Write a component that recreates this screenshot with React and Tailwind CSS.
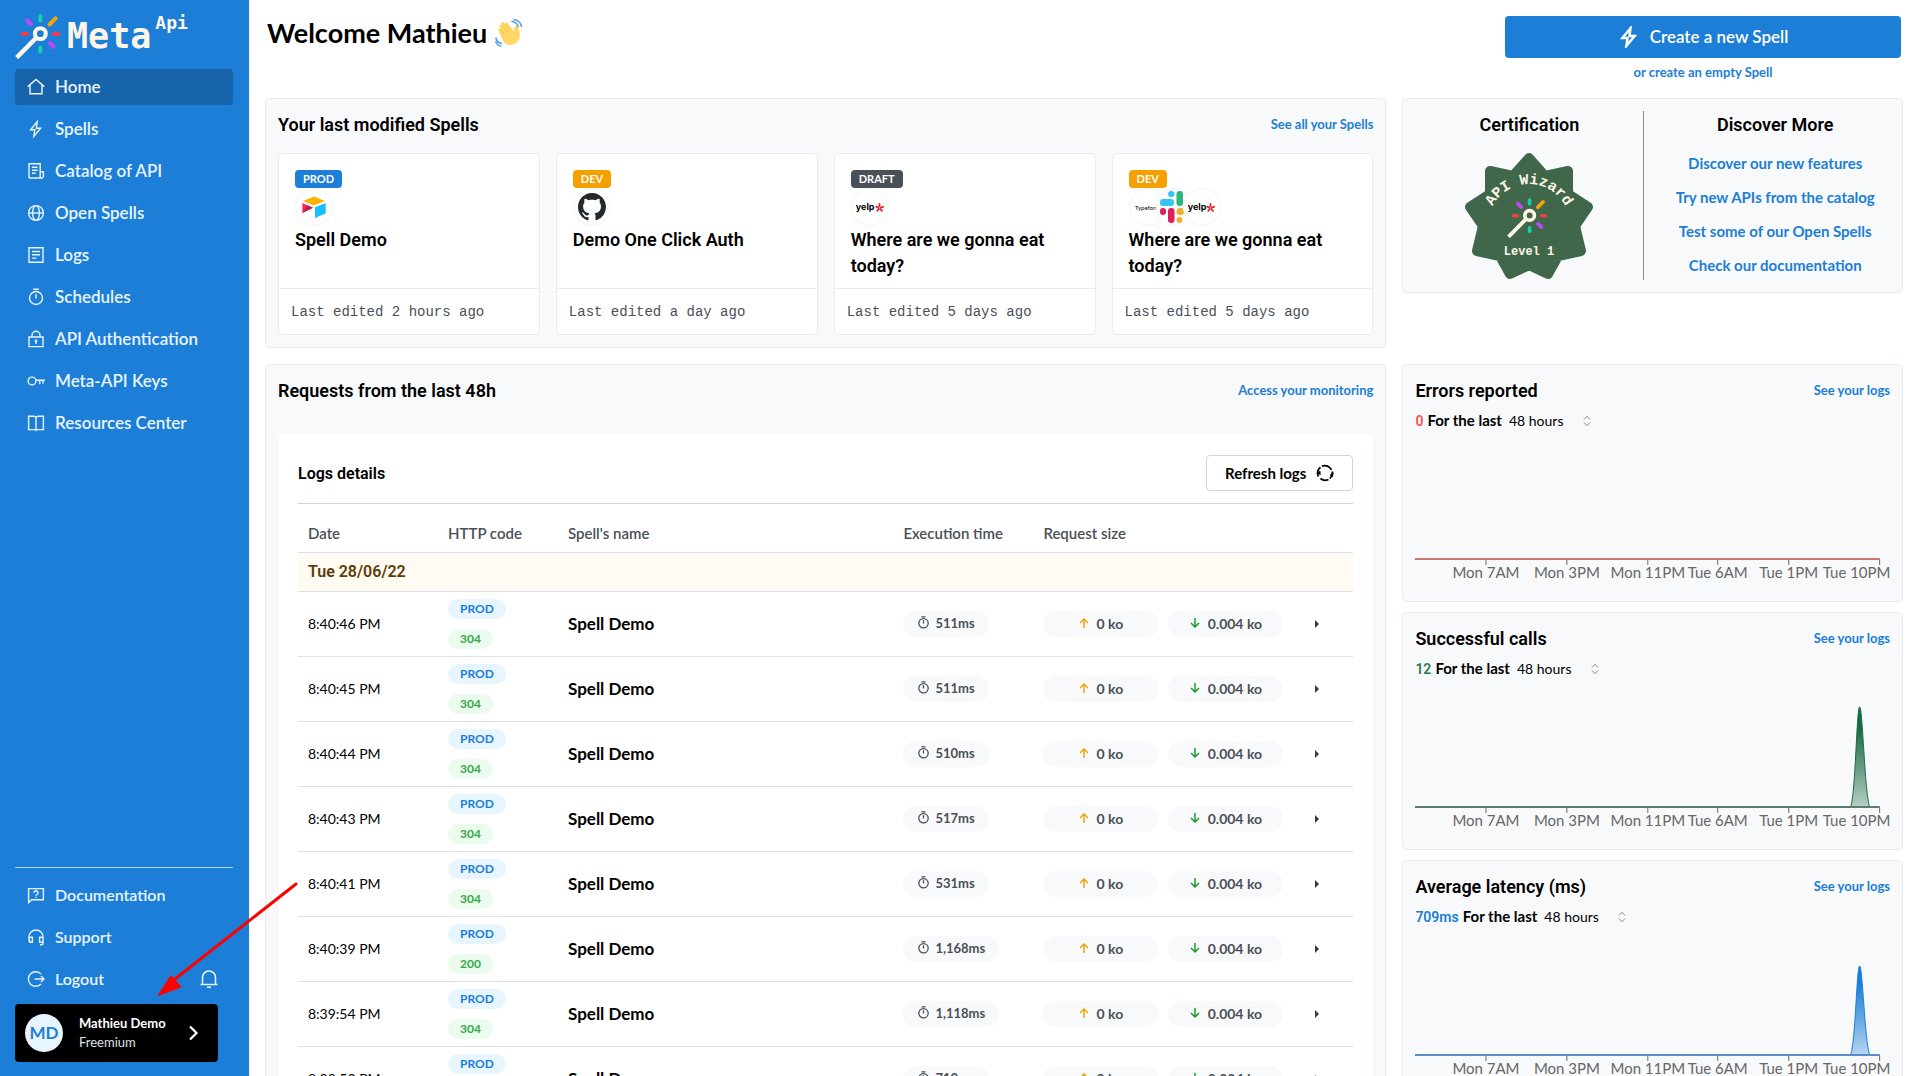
import React from "react";

const LATO = "font-['Lato','Open_Sans',sans-serif]";
const ROBOTO = "font-['Roboto','Liberation_Sans',sans-serif]";
const MONO = "font-['DejaVu_Sans_Mono','Liberation_Mono',monospace]";
const THIN_MONO = "font-['Liberation_Mono','DejaVu_Sans_Mono',monospace]";

function Icon({ children, className = "size-[18px]", width = 1.4, box = "0 0 18 18" }) {
  return (
    <svg
      viewBox={box}
      className={className}
      fill="none"
      stroke="currentColor"
      strokeWidth={width}
      aria-hidden="true"
    >
      {children}
    </svg>
  );
}

const glyphs = {
  home: <path d="M.8 8.600 9 1.400l8.200 7.200M3 7.200v8.600h12V7.200" />,
  spell: <path d="M10.200 1.800 3.600 9.800h4.200l-1 6.600 6.800-8.200H9.400z" />,
  catalog: (
    <path d="M2 16V1.800h11.200v10M2 16h12.400M13.200 9.800h3.200V14a2 2 0 0 1-3.200 1.600zM5 5.300h5.500M5 8.300h5.500M5 11.300h3.500" />
  ),
  globe: (
    <>
      <circle cx="9" cy="9" r="7.400" />
      <ellipse cx="9" cy="9" rx="3.400" ry="7.400" />
      <path d="M1.600 9h14.800" />
    </>
  ),
  logs: <path d="M2 1.800h14v14.400H2zM5 5.500h8M5 8.800h8M5 12.100h4.500" />,
  timer: (
    <>
      <circle cx="9" cy="10" r="6.500" />
      <path d="M6.200 1.200h5.600M9 6v4.500" />
    </>
  ),
  lock: (
    <>
      <path d="M2 7h14v9.600H2zM5 7V5.200a4 4 0 0 1 8 0V7M9 11v3" />
      <circle cx="9" cy="10.800" r=".7" />
    </>
  ),
  key: (
    <>
      <circle cx="5" cy="9" r="3.900" />
      <path d="M9 8.300h9M12.800 8.300v4M16 8.300v3.500" />
    </>
  ),
  book: <path d="M9 3.500v13.700M1.600 2.200h5.200A2.200 2.200 0 0 1 9 4.200a2.200 2.200 0 0 1 2.200-2h5.200v13.400H1.600z" />,
  docs: (
    <>
      <path d="M1.600 16.600V2.600h14.800v11.200H4.600z" />
      <path d="M7 6.800a2 2 0 1 1 2.800 1.800q-.8.300-.8 1.100M9 10.700v1.300" />
    </>
  ),
  support: (
    <path d="M2 13.500V9a7 7 0 0 1 14 0v6.500q0 1.300-3 1.300M2 9.300h3.400v5H2.800zM16 9.300h-3.400v5H16" />
  ),
  logout: <path d="M14 4A7.300 7.300 0 1 0 14 14M7.500 9h9.500M14 6l3 3-3 3" />,
};

function NavItem({ icon, label, active, size = "text-[17px]" }) {
  return (
    <a
      href="#"
      className={`flex h-9 items-center gap-[10px] rounded-sm pl-3 font-semibold text-[#e8f4ff] ${size} ${
        active ? "bg-[#1864ab]" : ""
      }`}
    >
      <Icon>{glyphs[icon]}</Icon>
      {label}
    </a>
  );
}

function Wand({ className }) {
  return (
    <svg viewBox="14 26 136 136" className={className} fill="none" strokeLinecap="round" aria-hidden="true">
      <g strokeWidth="12">
        <path stroke="#12d3a8" d="M89 36v12M89 128v12" />
        <path stroke="#f03e4d" d="M36 88h13M129 88h13" />
        <path stroke="#f5a30a" d="m116 60 18-18" />
        <path stroke="#be4bfa" d="m50 48 11 11M117 115l11 11" />
      </g>
      <path stroke="#fdf6e6" strokeWidth="13" strokeLinecap="butt" d="m19 158 58-59" />
      <circle cx="89" cy="87" r="16" stroke="#fdf6e6" strokeWidth="12" />
    </svg>
  );
}

function Wave() {
  return (
    <svg viewBox="0 0 28 28" className="size-7" fill="none" aria-hidden="true">
      <path
        d="M3.500 11.500c-.8-1.500 1-2.800 2.100-1.400L4.600 7.800c-.9-1.800 1.300-3.200 2.500-1.500l-.7-1.200c-.8-1.700 1.400-3 2.600-1.300l1.200 1.700c-.5-1.700 1.500-2.700 2.600-1.200l6.200 8.200.2-3.600c.1-2.300 3.500-2.600 4.300-.3 1.500 5.500 2.700 11-1.800 15-4.600 4-10.500 3-13.700-1.600z"
        fill="#ffd766"
      />
      <path d="m7.500 6.500 5.500 7.500M5 10l5.500 7M10.700 5.300l5 7" stroke="#eeb547" strokeWidth=".6" />
      <path
        d="M17 2.500c3 .2 5 2 6 5M19 .8c4 .2 6.500 2.700 7.500 6.500M1 19c.5 3 2.500 5 5.500 5.500M.8 23c1 2.500 2.500 3.800 5 4"
        stroke="#5d9fe8"
        strokeWidth="1.600"
        strokeLinecap="round"
      />
    </svg>
  );
}

function Sidebar() {
  return (
    <aside className={`flex h-screen w-[249px] shrink-0 flex-col bg-[#1c7ed6] px-[15px] pb-[14px] ${LATO}`}>
      <div className={`flex h-[69px] items-start pt-[13px] text-[#fdf6e6] ${MONO} font-bold`}>
        <Wand className="size-[46px] shrink-0" />
        <span className="ml-[6px] mt-1 text-[35px] leading-[38px]">Meta</span>
        <span className="ml-1 text-lg leading-5">Api</span>
      </div>
      <nav className="mr-px flex flex-col gap-[6px]">
        <NavItem icon="home" label="Home" active />
        <NavItem icon="spell" label="Spells" />
        <NavItem icon="catalog" label="Catalog of API" />
        <NavItem icon="globe" label="Open Spells" />
        <NavItem icon="logs" label="Logs" />
        <NavItem icon="timer" label="Schedules" />
        <NavItem icon="lock" label="API Authentication" />
        <NavItem icon="key" label="Meta-API Keys" />
        <NavItem icon="book" label="Resources Center" />
      </nav>
      <nav className="mr-px mt-auto flex flex-col gap-[6px] border-t border-[#a5d8ff] pt-[9px]">
        <NavItem icon="docs" label="Documentation" size="text-base" />
        <NavItem icon="support" label="Support" size="text-base" />
        <div className="flex items-center justify-between pr-[14px]">
          <NavItem icon="logout" label="Logout" size="text-base" />
          <button aria-label="Notifications" className="text-[#e8f4ff]">
            <Icon box="0 0 20 20" className="size-5" width={1.5}>
              <path d="M1.500 15.500h17M3.500 15.500V8.500a6.500 6.500 0 0 1 13 0v7M8 18.300h4" />
            </Icon>
          </button>
        </div>
      </nav>
      <button className="mr-4 mt-[7px] flex h-[58px] items-center rounded-sm bg-black pl-[10px] pr-4 text-left text-[13px] text-white">
        <span className="flex size-[38px] items-center justify-center rounded-full bg-[#e7f5ff] text-[17px] font-bold text-[#1c7ed6]">
          MD
        </span>
        <span className="ml-4 flex-1 leading-[19px]">
          <span className="block font-bold">Mathieu Demo</span>
          <span className="block text-[#dee2e6]">Freemium</span>
        </span>
        <Icon width={2.2}>
          <path d="m6 2.500 6.500 6.500L6 15.500" />
        </Icon>
      </button>
    </aside>
  );
}

function Panel({ title, link, className = "", children }) {
  return (
    <section className={`rounded-sm border border-[#e9ecef] bg-[#f8f9fb] p-3 ${className}`}>
      <div className="flex h-7 items-start justify-between">
        <h2 className={`${ROBOTO} text-lg font-semibold leading-7 text-black`}>{title}</h2>
        <a href="#" className="text-[13px] font-bold leading-[26px] text-[#1c7ed6]">
          {link}
        </a>
      </div>
      {children}
    </section>
  );
}

function AppCircle({ overlap, children }) {
  return (
    <span
      className={`flex size-[38px] items-center justify-center overflow-hidden rounded-full border border-[#f1f3f5] bg-white ${
        overlap ? "-ml-[11px]" : ""
      }`}
    >
      {children}
    </span>
  );
}

function Airtable() {
  return (
    <svg viewBox="0 0 24 22" className="w-6" aria-hidden="true">
      <path fill="#fcb400" d="M12 0.500 23 5 12 9.500 1 5z" />
      <path fill="#18bfff" d="M13 11.300 23.700 7v10.600L13 22z" />
      <path fill="#f82b60" d="M.3 7 11 11.800.3 17z" />
      <path fill="#ba1e45" d="m.3 17 5-7.700L11 11.800z" />
    </svg>
  );
}

function GitHub() {
  return (
    <svg viewBox="0 0 16 16" className="size-7" fill="#24292f" aria-hidden="true">
      <path d="M8 0C3.580 0 0 3.580 0 8c0 3.540 2.290 6.530 5.470 7.590.4.070.55-.17.55-.38 0-.19-.01-.82-.01-1.490-2.010.37-2.530-.49-2.690-.94-.09-.23-.48-.94-.82-1.130-.28-.15-.68-.52-.01-.53.63-.01 1.080.58 1.230.82.720 1.210 1.870.87 2.330.66.070-.52.28-.87.51-1.070-1.780-.2-3.640-.89-3.640-3.950 0-.87.31-1.590.82-2.150-.08-.2-.36-1.020.08-2.120 0 0 .67-.21 2.200.82.640-.18 1.320-.27 2-.27s1.360.09 2 .27c1.530-1.040 2.200-.82 2.200-.82.440 1.100.160 1.920.080 2.120.510.560.820 1.270.820 2.150 0 3.070-1.870 3.750-3.650 3.950.290.250.540.730.540 1.480 0 1.070-.010 1.930-.010 2.200 0 .21.150.46.550.38A8.010 8.010 0 0 0 16 8c0-4.420-3.580-8-8-8z" />
    </svg>
  );
}

function Yelp() {
  return (
    <span className="flex items-center text-black">
      <span className="font-['Inter',sans-serif] text-[9px] font-bold leading-3">yelp</span>
      <svg viewBox="0 0 10 10" className="size-[9px]" stroke="#e0232e" strokeWidth="2" strokeLinecap="round" aria-hidden="true">
        <path d="M5 1v2.700M1.400 4 3.500 5M2.500 8.800 4 6.700M6 6.700l1.800 2M6.500 5l2.500-.8" />
      </svg>
    </span>
  );
}

function Slack() {
  return (
    <svg viewBox="0 0 24 32" className="mr-[6px] w-6 shrink-0" aria-hidden="true">
      <rect x="8" y="0" width="6.500" height="6" rx="3" fill="#36c5f0" />
      <rect x="0" y="8" width="14" height="7" rx="3" fill="#36c5f0" />
      <rect x="16.500" y="0" width="6.500" height="15" rx="3" fill="#2eb67d" />
      <rect x="0" y="17" width="6" height="7" rx="3" fill="#e01e5a" />
      <rect x="8" y="17" width="6.500" height="15" rx="3" fill="#e01e5a" />
      <rect x="16.500" y="17" width="7.500" height="7" rx="3" fill="#ecb22e" />
      <rect x="16.500" y="26" width="6" height="6" rx="3" fill="#ecb22e" />
    </svg>
  );
}

const spells = [
  { badge: "PROD", color: "bg-[#1c7ed6]", title: "Spell Demo", edited: "2 hours ago", apps: [<Airtable />] },
  { badge: "DEV", color: "bg-[#f59f00]", title: "Demo One Click Auth", edited: "a day ago", apps: [<GitHub />] },
  { badge: "DRAFT", color: "bg-[#495057]", title: "Where are we gonna eat today?", edited: "5 days ago", apps: [<Yelp />] },
  {
    badge: "DEV",
    color: "bg-[#f59f00]",
    title: "Where are we gonna eat today?",
    edited: "5 days ago",
    apps: [<span className="text-[6px] text-black">Typeform</span>, <Slack />, <Yelp />],
  },
];

function SpellCard({ spell }) {
  return (
    <article className="flex flex-col rounded-sm border border-[#e9ecef] bg-white">
      <div className="h-[134px] px-4 pt-4">
        <span className={`flex h-[18px] w-fit items-center rounded-sm px-2 text-[11px] font-bold text-white ${spell.color}`}>
          {spell.badge}
        </span>
        <div className="flex">
          {spell.apps.map((app, i) => (
            <AppCircle key={i} overlap={i > 0}>
              {app}
            </AppCircle>
          ))}
        </div>
        <h3 className={`${ROBOTO} mt-px text-lg font-semibold leading-[26px] text-black`}>{spell.title}</h3>
      </div>
      <p className={`flex h-[46px] items-center border-t border-[#e9ecef] px-3 text-sm text-[#495057] ${THIN_MONO}`}>
        Last edited {spell.edited}
      </p>
    </article>
  );
}

function CertificationBadge() {
  return (
    <svg viewBox="0 0 130 128" className="w-[130px]" aria-label="API Wizard, level 1">
      <path
        fill="#40674a"
        stroke="#40674a"
        strokeWidth="10"
        strokeLinejoin="round"
        d="M65 6 81 24 104 19 104 42 124 55 111 74 117 99 94 104 84 122 65 113 46 122 36 104 13 99 19 74 6 55 26 42 26 19 49 24z"
      />
      <path id="wizard-arc" d="M24 73a41 41 0 0 1 82 0" fill="none" />
      <text fill="#fdf6e6" className="font-['Liberation_Mono','DejaVu_Sans_Mono',monospace] text-[15px] font-bold">
        <textPath href="#wizard-arc" startOffset="50%" textAnchor="middle">
          API Wizard
        </textPath>
      </text>
      <svg x="43" y="45" width="41" height="41">
        <Wand />
      </svg>
      <text
        x="65"
        y="103"
        textAnchor="middle"
        fill="#fdf6e6"
        className="font-['Liberation_Mono','DejaVu_Sans_Mono',monospace] text-[12px] font-bold"
      >
        Level 1
      </text>
    </svg>
  );
}

function Discover() {
  return (
    <section className="grid grid-cols-[14fr_15fr] self-start rounded-sm border border-[#e9ecef] bg-[#f8f9fb] p-3">
      <div className="flex h-[169px] flex-col items-center border-r border-[#868e96]">
        <h2 className={`${ROBOTO} text-lg font-semibold leading-7 text-black`}>Certification</h2>
        <div className="mt-[13px]">
          <CertificationBadge />
        </div>
      </div>
      <div className="flex flex-col items-center pl-4">
        <h2 className={`${ROBOTO} text-lg font-semibold leading-7 text-black`}>Discover More</h2>
        <ul className="mt-[14px] flex flex-col items-center gap-[14px] text-[15px] font-bold leading-5 text-[#1c7ed6]">
          <li><a href="#">Discover our new features</a></li>
          <li><a href="#">Try new APIs from the catalog</a></li>
          <li><a href="#">Test some of our Open Spells</a></li>
          <li><a href="#">Check our documentation</a></li>
        </ul>
      </div>
    </section>
  );
}

const logs = [
  ["8:40:46 PM", "304", "511ms"],
  ["8:40:45 PM", "304", "511ms"],
  ["8:40:44 PM", "304", "510ms"],
  ["8:40:43 PM", "304", "517ms"],
  ["8:40:41 PM", "304", "531ms"],
  ["8:40:39 PM", "200", "1,168ms"],
  ["8:39:54 PM", "304", "1,118ms"],
  ["8:39:53 PM", "304", "710ms"],
];

function SizePill({ up, children }) {
  return (
    <span className="flex h-[26px] w-[115px] items-center justify-center gap-2 rounded-full bg-[#f8f9fa]">
      <Icon box="0 0 10 12" className={`h-3 w-[10px] ${up ? "text-[#f5a30a]" : "text-[#1a9a2c]"}`} width={1.5}>
        <path d={up ? "M5 10V1M1 5l4-4 4 4" : "M5 0v9M1 5l4 4 4-4"} />
      </Icon>
      {children}
    </span>
  );
}

function LogsTable() {
  return (
    <div className="mt-[29px] rounded-sm bg-white px-5 pt-[21px] shadow-xs">
      <div className="flex h-[49px] items-start justify-between border-b border-[#ced4da]">
        <h3 className={`${ROBOTO} text-base font-semibold leading-[37px] text-black`}>Logs details</h3>
        <button className="flex h-9 items-center gap-[10px] rounded-sm border border-[#ced4da] px-[18px] text-[15px] font-bold text-black">
          Refresh logs
          <Icon width={1.8}>
            <path d="M2.500 12.500A7.300 7.300 0 0 1 4.500 3.200M6 2.200a7.300 7.300 0 0 1 9.500 3.600M16.200 7.500a7.300 7.300 0 0 1-2.400 7M12.500 15.500a7.300 7.300 0 0 1-8-1" />
            <path d="M.6 9.500 4 7l.5 3.500zM17.400 9 14 11l2.500 2z" fill="currentColor" strokeWidth=".5" />
          </Icon>
        </button>
      </div>
      <table className="mt-3 w-full table-fixed border-collapse text-left text-sm">
        <colgroup>
          <col className="w-[140px]" />
          <col className="w-[120px]" />
          <col />
          <col className="w-[140px]" />
          <col className="w-[260px]" />
          <col className="w-[60px]" />
        </colgroup>
        <thead>
          <tr className="h-9 border-b border-[#dee2e6] text-[15px] text-[#495057]">
            <th className="px-[10px] font-semibold">Date</th>
            <th className="px-[10px] font-semibold">HTTP code</th>
            <th className="px-[10px] font-semibold">Spell's name</th>
            <th className="px-[10px] font-semibold">Execution time</th>
            <th className="px-[10px] font-semibold">Request size</th>
            <td />
          </tr>
        </thead>
        <tbody>
          <tr className="h-[39px] border-b border-[#dee2e6] bg-[#fffaf2]">
            <td colSpan="6" className={`${ROBOTO} px-[10px] text-base font-semibold text-[#5c3d08]`}>
              Tue 28/06/22
            </td>
          </tr>
          {logs.map(([time, code, ms]) => (
            <tr key={time} className="h-[65px] border-b border-[#dee2e6] text-black">
              <td className="px-[10px]">{time}</td>
              <td className="px-[10px]">
                <div className="flex flex-col items-start gap-[10px] text-xs font-bold">
                  <span className="flex h-5 items-center rounded-full bg-[#e7f5ff] px-3 text-[#1c7ed6]">PROD</span>
                  <span className="flex h-5 items-center rounded-full bg-[#ebfbee] px-3 text-[#37a84a]">{code}</span>
                </div>
              </td>
              <td className="px-[10px] pt-[2px] text-[17px] font-bold">Spell Demo</td>
              <td className="px-[10px] font-bold text-[#495057]">
                <span className="flex h-[26px] w-fit items-center gap-[5px] rounded-full bg-[#f8f9fa] px-[14px] text-[13px]">
                  <Icon className="mb-[3px] size-[13px]" width={1.8}>{glyphs.timer}</Icon>
                  {ms}
                </span>
              </td>
              <td className="px-[10px] font-bold text-[#495057]">
                <div className="flex gap-[10px]">
                  <SizePill up>0 ko</SizePill>
                  <SizePill>0.004 ko</SizePill>
                </div>
              </td>
              <td className="pl-5">
                <button aria-label={`Expand ${time}`} className="flex h-3 w-2 items-center justify-center">
                  <svg viewBox="0 0 4 8" className="h-2 w-1" fill="#343a40" aria-hidden="true">
                    <path d="M0 0l4 4-4 4z" />
                  </svg>
                </button>
              </td>
            </tr>
          ))}
        </tbody>
      </table>
    </div>
  );
}

const ticks = [
  [71, 71, "Mon 7AM"],
  [152, 152, "Mon 3PM"],
  [233, 233, "Mon 11PM"],
  [303, 303, "Tue 6AM"],
  [374, 374, "Tue 1PM"],
  [465, 442, "Tue 10PM"],
];

function Chart({ id, color, axis, peak }) {
  return (
    <svg viewBox="0 2 475 152" className="block w-full" aria-hidden="true">
      <defs>
        <linearGradient id={id} x1="0" y1="0" x2="0" y2="1">
          <stop offset="0.2" stopColor={color} />
          <stop offset="1" stopColor={color} stopOpacity="0.3" />
        </linearGradient>
      </defs>
      {ticks.map(([x, labelX, label]) => (
        <g key={label}>
          <path d={`M${x} 124v6`} stroke="#666" />
          <text
            x={labelX}
            y="143"
            textAnchor="middle"
            fill="#666"
            className="font-['Lato','Open_Sans',sans-serif] text-[15px]"
          >
            {label}
          </text>
        </g>
      ))}
      {peak && (
        <path
          d={`M436 124C441 110 442 ${peak} 445 ${peak}S450 110 455 124z`}
          fill={`url(#${id})`}
          stroke={color}
        />
      )}
      <path d="M0 124h465" stroke={axis} strokeWidth="2" />
    </svg>
  );
}

function Stat({ id, title, value, valueColor, color, axis, peak }) {
  return (
    <Panel title={title} link="See your logs" className="h-[238px] pb-0">
      <div className="flex h-8 items-center text-sm text-black">
        <span className={`${ROBOTO} font-semibold ${valueColor}`}>{value}</span>
        <label htmlFor={`${id}-range`} className="ml-1 text-[15px] font-bold">
          For the last
        </label>
        <span className="relative ml-[7px] flex items-center">
          <select id={`${id}-range`} className="w-[82px] appearance-none bg-transparent">
            <option>48 hours</option>
          </select>
          <Icon box="0 0 8 12" className="pointer-events-none absolute right-0 h-3 w-2 text-[#868e96]" width={1}>
            <path d="M1 4.500 4 1.200l3 3.300M1 7.500l3 3.300 3-3.300" />
          </Icon>
        </span>
      </div>
      <Chart id={id} color={color} axis={axis} peak={peak} />
    </Panel>
  );
}

function Arrow() {
  return (
    <svg
      viewBox="0 0 142 116"
      className="pointer-events-none absolute left-[157px] top-[881px] w-[142px]"
      aria-hidden="true"
    >
      <path d="M139 3 18 98" stroke="#f00" strokeWidth="3" strokeLinecap="round" />
      <path d="M1 114.500 14 94.500 24 106z" fill="#f00" stroke="#f00" />
    </svg>
  );
}

export default function App() {
  return (
    <div className={`relative flex h-screen overflow-hidden bg-white ${LATO}`}>
      <Sidebar />
      <main className="min-w-0 flex-1 px-4">
        <header className="flex h-[98px] items-start justify-between pt-4">
          <h1 className="flex items-center gap-2 pl-[2px] text-[27px] font-bold leading-[34px] text-black">
            Welcome Mathieu <Wave />
          </h1>
          <div className="mr-[2px] flex w-[396px] flex-col items-center">
            <button className="flex h-[42px] w-full items-center justify-center gap-[10px] rounded-sm bg-[#1c7ed6] text-[17px] font-semibold text-white">
              <Icon className="size-[22px]" width={2}>{glyphs.spell}</Icon>
              Create a new Spell
            </button>
            <a href="#" className="mt-1 text-[13px] font-bold leading-5 text-[#1c7ed6]">
              or create an empty Spell
            </a>
          </div>
        </header>
        <div className="grid grid-cols-[56fr_25fr] gap-4">
          <Panel title="Your last modified Spells" link="See all your Spells">
            <div className="mt-[14px] grid grid-cols-4 gap-4">
              {spells.map((spell, i) => (
                <SpellCard key={i} spell={spell} />
              ))}
            </div>
          </Panel>
          <Discover />
          <Panel title="Requests from the last 48h" link="Access your monitoring">
            <LogsTable />
          </Panel>
          <div className="flex flex-col gap-[10px]">
            <Stat id="errors" title="Errors reported" value="0" valueColor="text-[#fa5252]" color="#c92a2a" axis="#cb7575" />
            <Stat id="success" title="Successful calls" value="12" valueColor="text-[#2b7a55]" color="#186a43" axis="#5a7d72" peak={24} />
            <Stat id="latency" title="Average latency (ms)" value="709ms" valueColor="text-[#1c7ed6]" color="#1c7ed6" axis="#5c8dc4" peak={35} />
          </div>
        </div>
      </main>
      <Arrow />
    </div>
  );
}
